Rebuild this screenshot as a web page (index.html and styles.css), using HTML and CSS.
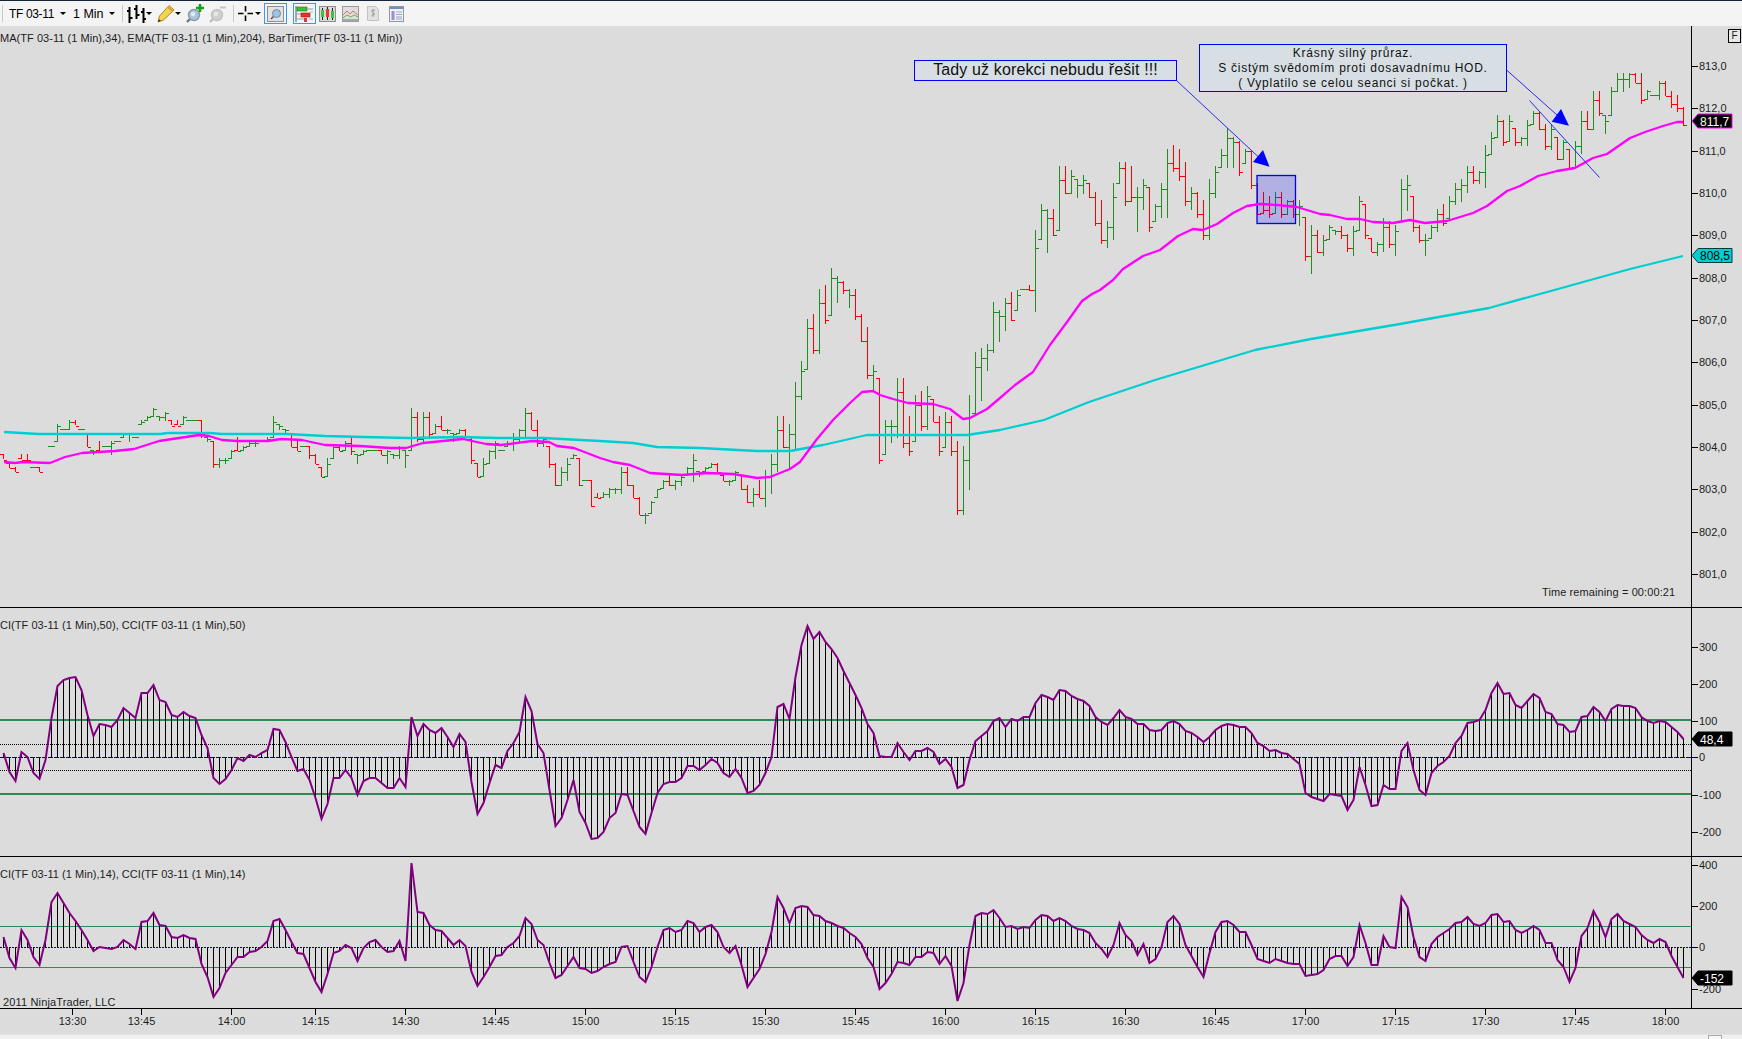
FILE: index.html
```html
<!DOCTYPE html>
<html lang="cs">
<head>
<meta charset="utf-8">
<title>TF 03-11 1 Min</title>
<link rel="stylesheet" href="styles.css">
</head>
<body>
<div class="app">
  <header class="toolbar">
    <span class="tb-sep"></span>
    <span class="tb-text tb-tf">TF 03-11</span><span class="caret c7"></span>
    <span class="tb-text tb-min">1 Min</span><span class="caret c5"></span>
    <span class="tb-sep s8"></span>
    <svg class="ic i-bars" viewBox="0 0 19 20"><path d="M2.5 3v16M0 7h2.5M2.500 14h3M9.500 1v14M7 5h2.500M9.500 11h3M16.500 4v15M14 8h2.500M16.500 15h2.500" fill="none" stroke="#000" stroke-width="2"/></svg><span class="caret c0"></span>
    <svg class="ic i-pencil" viewBox="0 0 18 20"><path d="M1 18l1.500-6L12 1.500 17 6 6.500 16z" fill="#f4d64e" stroke="#a08a2a"/><path d="M11 3l5 4.500" stroke="#e8973a" stroke-width="2"/><path d="M1 18l.8-3 2.200 2z" fill="#333"/></svg><span class="caret c0"></span>
    <svg class="ic i-zoomin" viewBox="0 0 18 20"><path d="M1 18l5-5" stroke="#6d7680" stroke-width="2.400"/><circle cx="8" cy="11" r="5.500" fill="#a9c4df" stroke="#8d98a3" stroke-width="1.400"/><circle cx="7" cy="10" r="2.200" fill="#dfeaf5"/><path d="M14 0v8M10 4h8" stroke="#17a017" stroke-width="2.600"/></svg>
    <svg class="ic i-zoomout" viewBox="0 0 17 20"><path d="M1 18l5-5" stroke="#bcbcbc" stroke-width="2.400"/><circle cx="8" cy="11" r="5.500" fill="#d0d0d0" stroke="#c2c2c2" stroke-width="1.400"/><circle cx="7" cy="10" r="2.200" fill="#e8e8e8"/><path d="M11 3.500h6" stroke="#c4c4c4" stroke-width="2"/></svg>
    <span class="tb-sep s7"></span>
    <svg class="ic i-cross" viewBox="0 0 15 15"><path d="M7.500 0v5.500M7.500 9.500v5.500M0 7.500h5.500M9.500 7.500h5.500" stroke="#000" stroke-width="1.600"/></svg><span class="caret c2"></span>
    <span class="tb-btn b-zoom"><svg class="ic-in" viewBox="0 0 17 16"><rect x=".5" y=".5" width="16" height="15" fill="#e2e2e2" stroke="#8f8f8f"/><path d="M4 13l3-3" stroke="#555" stroke-width="1.600"/><circle cx="9.500" cy="7.500" r="4" fill="#9fc3e6" stroke="#7b8894"/></svg></span>
    <span class="tb-btn b-bars"><svg class="ic-in" viewBox="0 0 19 16"><path d="M1 0v16" stroke="#555"/><rect x="2" y="1" width="10" height="4" fill="#35c435" stroke="#1d7a1d" stroke-width=".6"/><path d="M12 3h6M2 8h6M2 13h7" stroke="#999"/><rect x="6" y="7" width="9" height="4" fill="#e8322c" stroke="#8d1d1a" stroke-width=".6"/><rect x="9" y="12" width="3" height="4" fill="#e8322c"/><path d="M15 6h3M14 13h4" stroke="#aaa"/></svg></span>
    <svg class="ic i-cand" viewBox="0 0 17 16"><rect x=".5" y=".5" width="16" height="15" fill="#d8d8d8" stroke="#8f8f8f"/><path d="M3.500 2v12M8.500 1v13M13.500 2v12" stroke="#222"/><rect x="2" y="4" width="3" height="7" fill="#3fc23f"/><rect x="7" y="3" width="3" height="8" fill="#e33"/><rect x="12" y="5" width="3" height="7" fill="#3fc23f"/></svg>
    <svg class="ic i-line" viewBox="0 0 17 16"><rect x=".5" y=".5" width="16" height="15" fill="#dedede" stroke="#9a9a9a"/><path d="M1 9l4-4 3 3 3-3 5 4" fill="none" stroke="#e26a6a"/><path d="M1 12l4-3 4 2 3-2 4 2" fill="none" stroke="#59b859"/><rect x="1" y="13" width="15" height="2" fill="#a8a8a8"/></svg>
    <svg class="ic i-doc" viewBox="0 0 12 15"><path d="M.5.5h8l3 3v11H.5z" fill="#e2e2e2" stroke="#c2c2c2"/><path d="M8 4.500c-3-1.500-4 1-2 2s2 3-1.500 2.500M6 3v8" fill="none" stroke="#a9a9a9" stroke-width="1.200"/></svg>
    <svg class="ic i-props" viewBox="0 0 15 16"><rect x=".5" y=".5" width="14" height="15" fill="#eef1f6" stroke="#8f98a6"/><rect x="1" y="1" width="13" height="2" fill="#6f8fc0"/><rect x="2.500" y="5" width="3" height="9" fill="#9d8bd6"/><path d="M7 6h6M7 8.500h6M7 11h6M7 13h6" stroke="#9aa6ba"/></svg>
  </header>

  <main class="chart">
    <section class="panel panel-price">
      <svg class="plot" id="plot-price" viewBox="0 26 1691 581"></svg>
      <svg class="axis" id="axis-price" viewBox="1692 26 50 581"></svg>
      <div class="pane-label label-price">MA(TF 03-11 (1 Min),34), EMA(TF 03-11 (1 Min),204), BarTimer(TF 03-11 (1 Min))</div>
      <div class="f-btn">F</div>
      <div class="timer">Time remaining = 00:00:21</div>
      <div class="note note-a">Tady už korekci nebudu řešit !!!</div>
      <div class="note note-b">Krásný silný průraz.<br>S čistým svědomím proti dosavadnímu HOD.<br>( Vyplatilo se celou seanci si počkat. )</div>
    </section>
    <section class="panel panel-cci50">
      <svg class="plot" id="plot-cci50" viewBox="0 608 1691 248"></svg>
      <svg class="axis" id="axis-cci50" viewBox="1692 608 50 248"></svg>
      <div class="pane-label label-cci">CI(TF 03-11 (1 Min),50), CCI(TF 03-11 (1 Min),50)</div>
    </section>
    <section class="panel panel-cci14">
      <svg class="plot" id="plot-cci14" viewBox="0 857 1691 151"></svg>
      <svg class="axis" id="axis-cci14" viewBox="1692 857 50 151"></svg>
      <div class="pane-label label-cci">CI(TF 03-11 (1 Min),14), CCI(TF 03-11 (1 Min),14)</div>
      <div class="copyright">2011 NinjaTrader, LLC</div>
    </section>
    <svg class="time-axis" id="time-axis" viewBox="0 1009 1742 25"></svg>
  </main>

  <footer class="statusbar"><span class="grip"></span></footer>
</div>
<script src="chart.js"></script>
</body>
</html>
```
FILE: styles.css
```css
html, body { margin: 0; padding: 0; background: #dcdcdc; }
body { font-family: "Liberation Sans", Arial, sans-serif; color: #1c1c1c; }
.app { width: 1742px; height: 1039px; display: flex; flex-direction: column; overflow: hidden; }

/* toolbar */
.toolbar { height: 25px; flex: none; display: flex; align-items: center; padding-left: 2px; background: #f4f4f4; border-top: 1px solid #14253a; box-sizing: content-box; }
.tb-sep { width: 1px; height: 17px; background: #c9c9c9; flex: none; }
.s8 { margin-left: 8px; }
.s7 { margin-left: 7px; }
.tb-text { font-size: 12px; color: #000; flex: none; white-space: nowrap; }
.tb-tf { width: 44px; margin-left: 6px; font-size: 12px; letter-spacing: -.35px; }
.tb-min { width: 31px; margin-left: 8px; font-size: 12.5px; }
.caret { width: 0; height: 0; border-left: 3px solid transparent; border-right: 3px solid transparent; border-top: 3px solid #000; flex: none; margin-right: -1px; }
.c0 { margin-left: 0; }
.c2 { margin-left: 2px; }
.c5 { margin-left: 5px; }
.c7 { margin-left: 7px; }
.ic { flex: none; height: 20px; }
.i-bars { width: 19px; margin-left: 4px; }
.i-pencil { width: 18px; margin-left: 6px; }
.i-zoomin { width: 18px; margin-left: 6px; }
.i-zoomout { width: 17px; margin-left: 5px; }
.i-cross { width: 15px; height: 15px; margin-left: 4px; }
.i-cand { width: 17px; height: 16px; margin-left: 3px; }
.i-line { width: 17px; height: 16px; margin-left: 6px; }
.i-doc { width: 12px; height: 15px; margin-left: 8px; }
.i-props { width: 15px; height: 16px; margin-left: 10px; }
.tb-btn { width: 23px; height: 21px; box-sizing: border-box; border: 1px solid #3399ff; background: #f2f6fb; display: flex; align-items: center; justify-content: center; flex: none; }
.b-zoom { margin-left: 4px; }
.b-bars { margin-left: 6px; }
.ic-in { width: 17px; height: 16px; }
.b-bars .ic-in { width: 19px; }

/* chart */
.chart { flex: none; display: flex; flex-direction: column; background: #dcdcdc; }
.panel { position: relative; display: flex; border-bottom: 1px solid #000; flex: none; }
.panel-price { height: 581px; }
.panel-cci50 { height: 248px; }
.panel-cci14 { height: 151px; }
.plot { width: 1691px; height: 100%; flex: none; border-right: 1px solid #000; display: block; box-sizing: content-box; }
.axis { width: 50px; height: 100%; flex: none; display: block; overflow: hidden; }
.time-axis { width: 1742px; height: 25px; display: block; flex: none; }

.pane-label { position: absolute; left: 0; font-size: 11px; line-height: 14px; letter-spacing: .04px; color: #1c1c1c; white-space: nowrap; }
.label-price { top: 5px; }
.label-cci { top: 10px; }
.copyright { position: absolute; left: 3px; bottom: -1px; font-size: 11px; line-height: 14px; letter-spacing: .15px; white-space: nowrap; }
.timer { position: absolute; left: 1542px; top: 559px; font-size: 11px; line-height: 14px; letter-spacing: .1px; white-space: nowrap; }
.f-btn { position: absolute; left: 1728px; top: 3px; width: 11px; height: 12px; border: 1px solid #000; font-size: 10px; line-height: 12px; text-align: center; background: #e8e8e8; }

.note { position: absolute; box-sizing: border-box; border: 1px solid #0000ff; background: rgba(214, 223, 228, .9); text-align: center; color: #111; white-space: nowrap; }
.note-a { left: 914px; top: 34px; width: 263px; height: 21px; font-size: 16px; line-height: 18px; letter-spacing: .13px; }
.note-b { left: 1199px; top: 18px; width: 308px; height: 48px; font-size: 12px; line-height: 15px; letter-spacing: .75px; padding-top: 1px; }

.tick { stroke: #000; stroke-width: 1; }
.tick-label { font-family: "Liberation Sans", Arial, sans-serif; font-size: 11px; fill: #1c1c1c; }
.badge-label { font-family: "Liberation Sans", Arial, sans-serif; font-size: 12px; fill: #fff; }
.badge-label.dark { fill: #000; }
.bar { fill: none; stroke-width: 1; shape-rendering: crispEdges; }
.bar-up { stroke: #228b22; }
.bar-down { stroke: #ff0000; }
.ema34 { fill: none; stroke: #ff00ff; stroke-width: 2.3; stroke-linejoin: round; }
.ema204 { fill: none; stroke: #00ced1; stroke-width: 2.3; stroke-linejoin: round; }
.level-wide { stroke: #2e8b57; stroke-width: 2; shape-rendering: crispEdges; }
.level-thin { stroke: #2e8b57; stroke-width: 1; shape-rendering: crispEdges; }
.zero { stroke: #00008b; stroke-width: 1; stroke-dasharray: 5 1; shape-rendering: crispEdges; }
.zero-dot { stroke: #00008b; stroke-width: 1; stroke-dasharray: 2 1; shape-rendering: crispEdges; }
.dots { stroke: #000; stroke-width: 1; stroke-dasharray: 1 1; shape-rendering: crispEdges; }
.stems { fill: none; stroke: #000; stroke-width: 1; shape-rendering: crispEdges; }
.cci { fill: none; stroke: #800080; stroke-width: 2; stroke-linejoin: miter; }
.draw-line { stroke: #2a2af0; stroke-width: 1; fill: none; }
.draw-arrow { fill: #0000ff; }
.draw-rect { fill: rgba(0, 0, 255, .2); stroke: #0000ff; stroke-width: 1.3; }

.statusbar { flex: 1; background: #f0f0f0; border-top: 1px solid #e4e4e4; position: relative; }
.grip { position: absolute; left: 1708px; top: 0; width: 14px; height: 5px; border: 1px solid #a9a9a9; border-bottom: 0; background: #f8f8f8; box-sizing: border-box; }
```
FILE: chart.js
```js
// Chart data: pixel rows read per bar; bar i stands at x = 3 + 6 * i.
const G = 'g', R = 'r', _ = null;
const BARS = [
[454,458,R],[463,467,R],[467,471,R],[454,458,R],[454,462,R],[467,467,G],[467,471,R],_,[446,446,G],[424,441,G],
[429,429,G],[420,429,G],[420,424,R],[429,429,G],[433,446,R],[450,454,G],[441,450,R],[446,446,G],[441,454,G],[441,441,G],
[433,437,G],[433,441,G],[437,437,G],[420,424,G],[416,420,G],[408,416,G],[416,420,G],[412,420,G],[420,424,R],[420,424,R],
[416,424,G],[420,420,G],[420,420,G],[420,437,R],[437,441,G],[441,467,R],[458,467,G],[458,463,G],[450,458,G],[437,450,R],
[446,450,G],[441,446,G],[441,446,G],_,[437,441,G],[416,437,G],[424,429,G],[429,433,G],[433,446,R],[441,450,R],
[446,446,G],[446,458,R],[454,463,R],[467,476,R],[458,476,G],[446,458,G],[446,450,R],[441,450,G],[437,454,R],[454,463,G],
[450,454,G],[450,450,G],[450,450,G],[450,454,R],[450,463,G],[454,458,G],[446,458,G],[450,467,G],[408,450,G],[412,441,R],
[412,441,G],[412,437,R],[424,433,G],[416,429,R],[429,433,G],[433,441,G],[429,433,G],[429,437,R],[437,463,R],[463,476,R],
[458,476,G],[450,463,G],[441,458,G],[450,450,G],[441,446,G],[433,450,G],[429,441,G],[408,437,G],[412,429,R],[420,446,R],
[437,446,G],[446,467,R],[463,485,R],[467,485,G],[458,480,G],[454,458,G],[458,485,R],[480,480,G],[480,506,R],[493,497,R],
[492,497,G],[488,497,G],[488,493,G],[467,493,G],[467,485,R],[485,497,R],[497,514,R],[513,523,G],[501,513,G],[489,497,G],
[480,488,G],[475,485,R],[480,489,G],[476,485,G],[467,475,G],[454,481,G],[471,476,G],[467,471,G],[463,467,G],[463,471,R],
[475,480,R],[480,485,G],[471,480,G],[475,489,R],[485,502,R],[488,506,G],[480,497,R],[470,506,G],[454,493,G],[416,471,G],
[416,447,R],[424,468,G],[382,450,G],[361,399,G],[319,369,G],[314,353,R],[289,353,G],[285,323,R],[268,315,G],[276,302,G],
[281,293,R],[289,307,G],[289,319,R],[314,341,R],[327,378,R],[365,390,G],[378,463,R],[420,454,G],[420,442,G],[378,437,G],
[378,447,R],[416,455,R],[395,441,G],[391,430,R],[386,429,G],[399,421,R],[416,455,R],[412,447,G],[416,455,R],[441,514,R],
[446,514,G],[395,489,G],[352,413,G],[348,400,G],[344,370,G],[302,352,G],[310,341,G],[298,330,G],[292,320,R],[290,310,G],
[289,289,G],[285,290,R],[230,311,G],[204,239,G],[209,252,G],[209,235,R],[166,230,G],[166,193,R],[170,193,G],[179,197,G],
[175,193,G],[183,197,R],[192,225,R],[200,243,R],[221,247,G],[183,239,G],[162,183,G],[162,205,R],[166,201,R],[187,231,G],
[179,209,G],[187,231,R],[204,221,G],[183,217,G],[149,217,G],[145,171,R],[149,180,R],[162,205,R],[187,209,G],[192,217,R],
[200,239,R],[179,239,G],[166,197,G],[149,167,G],[128,167,G],[137,167,G],[141,175,R],[149,163,G],[150,188,R],[183,214,R],
[192,213,R],[196,217,R],[192,213,G],[192,217,R],[200,214,G],[200,217,R],[200,225,G],[217,260,R],[225,273,G],[230,252,R],
[235,255,G],[225,239,G],[230,234,G],[226,238,R],[234,251,R],[226,255,G],[196,230,G],[204,238,R],[238,251,R],[242,255,G],
[218,251,G],[221,247,R],[225,255,G],[179,221,G],[175,210,G],[196,231,R],[225,242,R],[234,255,G],[225,238,G],[209,231,G],
[204,225,R],[196,218,G],[183,204,G],[179,201,G],[166,192,G],[166,183,R],[171,183,G],[145,187,G],[132,154,G],[115,137,G],
[120,145,R],[115,141,G],[128,145,R],[137,145,G],[120,145,G],[111,124,G],[111,129,R],[124,149,R],[124,149,G],[137,159,R],
[140,159,G],[149,167,R],[141,167,G],[111,153,G],[111,129,R],[91,129,G],[91,115,R],[115,133,G],[87,115,G],[73,91,G],
[73,91,G],[73,87,G],[73,82,R],[73,103,R],[90,99,G],[95,95,G],[81,99,G],[81,95,R],[91,107,R],[95,111,R],[107,125,R]
];

const EMA34 = [[4,462],[15,463],[23,462],[50,463],[65,457],[82,453],[115,451],[134,449],[159,441],[199,435],[209,436],[222,440],[237,441],[268,441],[281,439],[302,440],[325,445],[360,446],[390,448],[406,448],[423,443],[463,439],[486,444],[501,445],[532,441],[549,442],[557,446],[574,448],[600,458],[613,462],[630,465],[650,473],[682,475],[707,473],[733,474],[757,478],[770,477],[790,469],[800,462],[817,439],[833,420],[850,403],[862,392],[873,391],[880,395],[893,399],[908,403],[933,404],[950,409],[963,419],[970,418],[987,409],[1000,398],[1015,385],[1033,372],[1050,345],[1067,322],[1082,301],[1092,294],[1100,290],[1113,280],[1123,269],[1143,256],[1160,250],[1178,236],[1193,229],[1203,230],[1217,224],[1233,213],[1247,206],[1260,204],[1277,205],[1297,207],[1320,214],[1330,215],[1347,219],[1360,219],[1373,222],[1393,223],[1410,220],[1425,223],[1447,221],[1473,213],[1487,206],[1507,191],[1520,186],[1538,176],[1557,171],[1575,168],[1593,158],[1607,154],[1630,138],[1645,132],[1663,126],[1677,122],[1683,122]];

const EMA204 = [[4,432],[38,434],[160,434],[168,433],[210,433],[222,434],[287,434],[325,436],[364,437],[409,438],[461,437],[497,438],[543,438],[600,441],[633,443],[657,447],[700,448],[757,451],[790,451],[823,445],[867,435],[967,435],[1000,430],[1044,420],[1089,402],[1155,380],[1255,350],[1311,339],[1400,324],[1489,308],[1558,289],[1630,269],[1683,256]];

const CCI50 = [753,772,781,752,757,773,779,760,718,686,680,678,677,690,715,736,724,725,727,720,708,713,718,693,693,685,700,702,715,717,712,716,718,735,748,778,784,779,770,758,761,755,757,753,750,729,730,742,757,771,769,780,798,819,804,778,778,770,778,795,781,778,778,783,788,788,778,787,717,736,724,730,733,728,737,747,734,742,782,814,803,783,765,768,751,743,732,697,711,744,753,790,826,818,800,780,812,823,839,838,
832,818,813,794,795,811,827,834,813,793,784,782,782,778,766,766,770,765,759,763,773,777,769,778,793,791,785,773,757,707,704,719,677,645,626,639,632,642,649,658,671,683,695,708,724,733,756,757,757,743,752,760,751,751,748,752,764,759,767,788,785,760,741,736,731,721,718,727,719,721,717,717,703,695,697,700,690,691,696,699,701,706,717,
722,725,718,710,717,719,724,724,730,731,730,723,721,724,731,733,737,742,737,730,726,724,725,727,727,733,743,746,751,750,753,754,759,764,793,797,799,801,794,795,796,810,800,767,785,806,805,785,789,789,751,743,770,790,795,773,766,762,756,743,736,723,722,720,710,693,683,694,693,705,708,701,694,698,712,714,724,725,732,731,717,716,707,712,721,709,705,706,706,708,717,721,723,721,722,727,732,739];

const CCI14 = [937,958,968,930,940,957,965,940,902,893,903,913,921,930,940,951,947,948,949,947,940,944,949,922,921,913,925,926,937,938,935,938,939,964,977,997,988,973,965,957,957,952,951,947,941,921,919,930,942,953,954,968,982,992,974,953,951,945,948,961,948,942,940,947,952,951,941,961,863,912,913,925,930,931,938,945,940,946,972,986,977,967,956,955,947,943,936,918,924,940,945,963,978,975,966,957,968,969,973,971,
967,964,962,947,946,962,977,982,967,947,930,928,932,930,921,923,932,927,925,932,947,953,946,965,987,978,969,954,932,897,908,923,908,906,907,915,916,921,923,926,928,933,937,944,958,967,989,983,974,962,963,965,957,957,952,953,964,956,966,1001,983,945,916,913,914,910,918,927,926,929,927,928,920,915,916,921,918,921,926,929,930,933,943,
949,957,945,923,935,941,955,944,963,959,947,922,916,924,945,956,967,977,953,932,922,921,925,932,932,945,959,961,963,959,961,963,964,964,976,975,974,970,959,956,956,966,957,925,943,965,965,936,947,948,897,907,937,957,961,944,937,933,929,923,922,917,924,926,923,915,914,922,921,930,933,930,926,930,943,943,960,967,982,968,936,928,911,922,937,919,914,921,924,927,935,940,943,939,942,956,967,978];

const NS = 'http://www.w3.org/2000/svg';
function el(parent, tag, attrs, text) {
  const n = document.createElementNS(NS, tag);
  for (const k in attrs) n.setAttribute(k, attrs[k]);
  if (text !== undefined) n.textContent = text;
  parent.appendChild(n);
  return n;
}
const barX = i => 3 + 6 * i;
const pts = list => list.map(p => p.join(',')).join(' ');
const perBar = ys => ys.map((y, i) => [barX(i) + .5, y]);

/* ---------- price plot ---------- */
const price = document.getElementById('plot-price');
const TICK = 4.233;
const snap = y => 66 + Math.round((y - 66) / TICK) * TICK;
let up = '', down = '', prevClose = null;
BARS.forEach((b, i) => {
  if (!b) return;
  const [h, l, c] = b;
  const x = barX(i) + .5;
  const clamp = v => Math.max(h, Math.min(l, v));
  const open = prevClose === null ? (c === G ? l : h) : clamp(prevClose);
  const range = l - h;
  const close = h === l ? h : (c === G ? snap(h + range * .22) : snap(l - range * .06));
  const yo = Math.round(open) + .5, yc = Math.round(close) + .5;
  const d = `M${x} ${h}V${l + 1}M${x - 3.5} ${yo}H${x}M${x} ${yc}H${x + 3.5}`;
  if (c === G) up += d; else down += d;
  prevClose = close;
});
el(price, 'path', { class: 'bar bar-up', d: up });
el(price, 'path', { class: 'bar bar-down', d: down });
el(price, 'rect', { class: 'draw-rect', x: 1257, y: 175.5, width: 38.5, height: 48 });
el(price, 'polyline', { class: 'ema204', points: pts(EMA204) });
el(price, 'polyline', { class: 'ema34', points: pts(EMA34) });
[[1176.500, 80.500, 1266, 164], [1506, 69.500, 1566, 123], [1529.500, 100.500, 1599.500, 177.500]].forEach(l =>
  el(price, 'line', { class: 'draw-line', x1: l[0], y1: l[1], x2: l[2], y2: l[3] }));
el(price, 'polygon', { class: 'draw-arrow', points: '1269.500,166.700 1263,150 1253,162' });
el(price, 'polygon', { class: 'draw-arrow', points: '1569,125.700 1561,109 1551.700,121.700' });

/* ---------- CCI plots ---------- */
function cci(id, ys, zero, levels, cls) {
  const svg = document.getElementById(id);
  levels.forEach(y => el(svg, 'line', { class: cls, x1: 0, x2: 1691, y1: y, y2: y }));
  el(svg, 'path', { class: 'stems', d: ys.map((y, i) => `M${barX(i) + .5} ${zero}V${Math.round(y)}`).join('') });
  return svg;
}
const p50 = cci('plot-cci50', CCI50, 757.5, [720, 794], 'level-wide');
[744.5, 770.5].forEach(y => el(p50, 'line', { class: 'dots', x1: 0, x2: 1691, y1: y, y2: y }));
el(p50, 'line', { class: 'zero', x1: 0, x2: 1691, y1: 757.5, y2: 757.5 });
el(p50, 'polyline', { class: 'cci', points: pts(perBar(CCI50)) });

const p14 = cci('plot-cci14', CCI14, 947.5, [926.5, 967.5], 'level-thin');
el(p14, 'line', { class: 'zero-dot', x1: 0, x2: 1691, y1: 947.5, y2: 947.5 });
el(p14, 'polyline', { class: 'cci', points: pts(perBar(CCI14)) });

/* ---------- value axes ---------- */
function axis(id, ticks) {
  const svg = document.getElementById(id);
  ticks.forEach(([y, label]) => {
    el(svg, 'line', { class: 'tick', x1: 1692, x2: 1698, y1: y + .5, y2: y + .5 });
    el(svg, 'text', { class: 'tick-label', x: 1699, y: y + 3.5 }, label);
  });
  return svg;
}
function badge(svg, y, fill, edge, label, dark) {
  el(svg, 'polygon', { fill, stroke: edge, points: `1692,${y} 1698,${y - 7} ${1732},${y - 7} ${1732},${y + 7} 1698,${y + 7}` });
  el(svg, 'text', { class: 'badge-label' + (dark ? ' dark' : ''), x: 1700, y: y + 4.5 }, label);
}
const priceTicks = [];
for (let p = 813; p >= 801; p--) priceTicks.push([Math.round(66 + (813 - p) * 42.33), p + ',0']);
const ap = axis('axis-price', priceTicks);
badge(ap, 121, '#000', '#ff00ff', '811,7');
badge(ap, 255.500, '#00ced1', '#003c3c', '808,5', true);

const a50 = axis('axis-cci50', [[647, '300'], [684, '200'], [721, '100'], [757, '0'], [795, '-100'], [832, '-200']]);
badge(a50, 739, '#000', '#000', '48,4');
const a14 = axis('axis-cci14', [[865, '400'], [906, '200'], [947, '0'], [989, '-200']]);
badge(a14, 978, '#000', '#000', '-152');

/* ---------- time axis ---------- */
const ta = document.getElementById('time-axis');
[[72, '13:30'], [141, '13:45'], [231, '14:00'], [315, '14:15'], [405, '14:30'], [495, '14:45'], [585, '15:00'], [675, '15:15'], [765, '15:30'], [855, '15:45'], [945, '16:00'], [1035, '16:15'], [1125, '16:30'], [1215, '16:45'], [1305, '17:00'], [1395, '17:15'], [1485, '17:30'], [1575, '17:45'], [1665, '18:00']].forEach(([x, t]) => {
  el(ta, 'line', { class: 'tick', x1: x + .5, x2: x + .5, y1: 1009, y2: 1015 });
  el(ta, 'text', { class: 'tick-label', x: x + .5, y: 1025, 'text-anchor': 'middle' }, t);
});
```
